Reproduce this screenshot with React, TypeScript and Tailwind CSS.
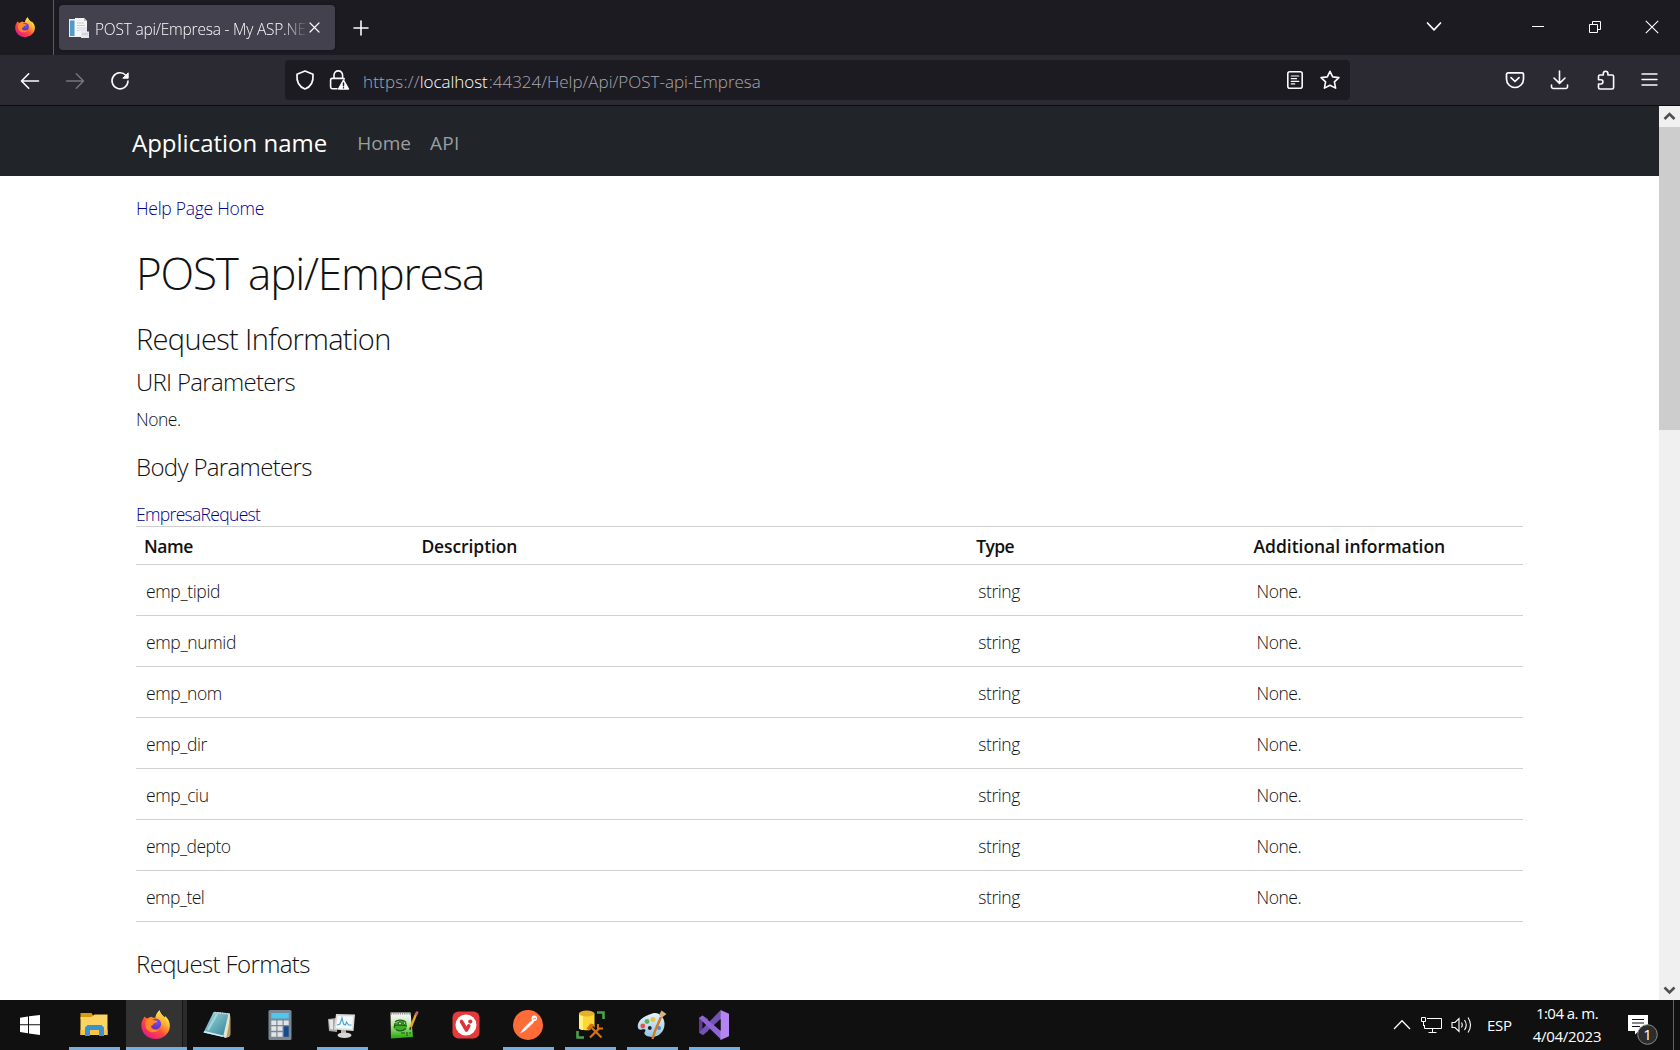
import React from "react";

const rows: [string, string][] = [
  ["emp_tipid", "tracking-[-0.36px]"],
  ["emp_numid", "tracking-[-0.35px]"],
  ["emp_nom", "tracking-[-0.42px]"],
  ["emp_dir", "tracking-[-0.42px]"],
  ["emp_ciu", "tracking-[-0.38px]"],
  ["emp_depto", "tracking-[-0.52px]"],
  ["emp_tel", "tracking-[-0.55px]"],
];

function Firefox({ size, id }: { size: number; id: string }) {
  return (
    <svg width={size} height={size} viewBox="0 0 28 28" className="block">
      <defs>
        <linearGradient id={id + "a"} x1="0.85" y1="0.1" x2="0.2" y2="0.95">
          <stop offset="0.05" stopColor="#fff44f" />
          <stop offset="0.35" stopColor="#ffa02b" />
          <stop offset="0.6" stopColor="#ff4b3e" />
          <stop offset="1" stopColor="#e8168b" />
        </linearGradient>
        <radialGradient id={id + "b"} cx="0.6" cy="0.3" r="0.8">
          <stop offset="0" stopColor="#7a4bf0" />
          <stop offset="1" stopColor="#5b2db5" />
        </radialGradient>
        <linearGradient id={id + "c"} x1="0" y1="0" x2="0" y2="1">
          <stop offset="0" stopColor="#ffe14a" />
          <stop offset="1" stopColor="#ff9a2c" stopOpacity="0.6" />
        </linearGradient>
      </defs>
      <path fill={`url(#${id}a)`} d="M3.4 6.2C4.6 7.6 5.6 7.9 6.8 8c.9-.9 2-1.4 3-1.6C10.8 7 12 7.6 14 7.4c.3-2.9 2-5.6 4-7.2.3 2.5 2 4.2 3.7 5.8.3.4.8.8 1 1.2.4-.4.5-.9.5-1.3 2.9 2.5 4.7 5.6 4.7 9.3C27.9 22.500 21.800 28 14.200 28 6.500 28 .300 22.300.300 14.900.300 12.600.900 10.400 2 8.700c.8-1 1-1.700 1.400-2.500z" />
      <circle cx="14.200" cy="13.500" r="5.200" fill={`url(#${id}b)`} />
      <path fill="#ff8a26" d="M5.400 9.500c2-1.800 5.200-.8 6.800.3 1.300.2 3.300.1 3.700.8-.5 1.500-2 1.800-3.300 2.200-.8.500-.6 1.300-1.300 1.900-.8.4-1.600.6-1.800 1.700 1.200 2.800 5.300 4 8.300 1.800-1.800 4-9 4.600-12 .6C3.800 16.300 3.600 12 5.400 9.500z" />
      <path fill={`url(#${id}c)`} d="M18 .2c.3 2.500 2 4.200 3.700 5.800 2 2.500 2.800 6 1.800 9.800-.5-3.900-2.200-6.200-5-7.700-2-.8-3.700-.9-4.500-.7.300-2.900 2-5.600 4-7.200z" />
    </svg>
  );
}

function Line({ size = 20, w = 1.5, children, color = "#fbfbfe" }: { size?: number; w?: number; color?: string; children: React.ReactNode }) {
  return (
    <svg width={size} height={size} viewBox={`0 0 ${size} ${size}`} fill="none" stroke={color} strokeWidth={w} strokeLinecap="round" strokeLinejoin="round" className="block shrink-0">
      {children}
    </svg>
  );
}

function TabBar() {
  return (
    <div className="flex h-[55px] bg-[#1c1b22] text-[#fbfbfe]">
      <div className="w-[54px] border-r border-[#5b5a63] pl-[15px] pt-[17px]">
        <Firefox size={20} id="tab" />
      </div>
      <div className="ml-[5px] mt-[5px] flex h-[45px] w-[276px] rounded bg-[#42414d] pl-[10px] pt-[13px] shadow-[0_0_3px_#00000066]">
        <svg width="20" height="20" viewBox="0 0 20 20" className="block shrink-0">
          <path d="M0 1h13v18H0z" fill="#e9eef2" />
          <path d="M1 2.500h4.500v15.500H1z" fill="#4f9ccb" />
          <path d="M6 0h9l3 3v15H6z" fill="#f5f5f6" />
          <path d="M15 0v3h3z" fill="#b9bcc2" />
          <path d="M8 5h7M8 7.500h8M8 10h3M8 12.500h2" stroke="#c8cbd0" />
          <path d="M10 9h8v4h-8zM12 13.500h8V20h-8z" fill="#e3e6ea" />
          <path d="M13 16h6" stroke="#bfc3c9" />
        </svg>
        <div className="ml-[6px] w-[213px] overflow-hidden whitespace-pre text-[15.5px] font-light leading-[22px] tracking-[-0.22px] [mask-image:linear-gradient(to_right,black_188px,transparent_213px)]">
          POST api/Empresa - My ASP.NET
        </div>
        <div className="ml-[1px] mt-[4px]">
          <Line size={11} w={1.2}><path d="M1 1l9 9M10 1l-9 9" /></Line>
        </div>
      </div>
      <div className="ml-[18px] mt-[20px]">
        <Line size={16} w={1.600}><path d="M8 1v14M1 8h14" /></Line>
      </div>
      <div className="ml-auto flex">
        <div className="mt-[17px]"><Line size={20} w={1.700}><path d="M4.500 6l6.500 6.800L17.500 6" /></Line></div>
        <svg width="13" height="14" className="ml-[89px] mt-[20px] block"><path d="M0 6.500h12" stroke="#fff" /></svg>
        <svg width="13" height="13" className="ml-[44px] mt-[21px] block" fill="none" stroke="#fff">
          <path d="M.5 3.500h8v8h-8zM3.500 3.500v-3h8v8h-3" />
        </svg>
        <svg width="14" height="14" className="ml-[43px] mr-[21px] mt-[20px] block" stroke="#fff" strokeWidth="1.1"><path d="M.8.8l12.400 12.400M13.200.8L.8 13.200" /></svg>
      </div>
    </div>
  );
}

function ToolBar() {
  return (
    <div className="flex h-[51px] items-start border-b border-[#0c0c0d] bg-[#2b2a33] text-[#fbfbfe]">
      <div className="ml-[20px] mt-[16px]"><Line w={1.6}><path d="M18.500 10H1.700M8.700 2.800L1.500 10l7.200 7.200" /></Line></div>
      <div className="ml-[25px] mt-[16px]"><Line w={1.4} color="#77767e"><path d="M1.500 10h17M11.300 2.800L18.500 10l-7.200 7.200" /></Line></div>
      <div className="ml-[25px] mt-[16px]">
        <Line w={1.600}>
          <path d="M16 4.500A8 8 0 1 0 18 10" />
          <path d="M18.200 2.200v5h-5z" fill="#fbfbfe" strokeWidth="1" />
        </Line>
      </div>
      <div className="ml-[155px] mt-[5px] flex h-[40px] w-[1065px] items-start rounded bg-[#1c1b22]">
        <div className="ml-[10px] mt-[10px]"><Line w={1.700}><path d="M10 1l8 3.200c.5 5.800-1.400 12.300-8 14.800C3.400 16.500 1.500 10 2 4.200z" /></Line></div>
        <div className="ml-[14px] mt-[10px]">
          <Line size={21} w={1.600}>
            <path d="M5 8.500V5.200a4.300 4.300 0 0 1 8.600 0v3.300M8 18.700H3.200A1.600 1.600 0 0 1 1.600 17.100V10a1.600 1.600 0 0 1 1.600-1.600h11a1.600 1.600 0 0 1 1 .5" />
            <path d="M14.500 10l5 9H9.500z" fill="#fbfbfe" strokeWidth="1.400" />
            <path d="M14.500 13v2.800M14.500 17.700v.2" stroke="#1c1b22" strokeWidth="1.400" />
          </Line>
        </div>
        <div className="ml-[13px] mt-[8px] whitespace-pre text-[17px] font-light leading-[27px] text-[#a9a8ae]">
          <span className="tracking-[0.2px]">https://</span>
          <span className="inline-block w-[69px] tracking-[-0.03px] text-white">localhost</span>
          <span>:44324/Help/Api/POST-api-Empresa</span>
        </div>
        <div className="ml-auto mt-[10px]">
          <Line w={1.600}>
            <rect x="2.800" y="1.800" width="14.400" height="16.400" rx="2" />
            <path d="M6.300 6h7.500M6.300 8.700h5.200M6.300 11.300h7.500M6.300 13.900h3.400" strokeWidth="1.200" />
          </Line>
        </div>
        <div className="ml-[15px] mr-[10px] mt-[10px]">
          <Line w={1.600}><path d="M10 1.300l2.700 5.600 6.200.7-4.500 4.300 1.200 6.200L10 15.200l-5.600 2.900 1.200-6.200L1.100 7.600l6.200-.7z" /></Line>
        </div>
      </div>
      <div className="ml-[155px] mt-[16px]"><Line w={1.700}><path d="M3 1.800h14a1.500 1.500 0 0 1 1.500 1.500V8a8.500 8.500 0 0 1-17 0V3.300A1.500 1.500 0 0 1 3 1.800zM6 6.700l4 3.800 4-3.800" /></Line></div>
      <div className="ml-[25px] mt-[15px]"><Line w={1.600}><path d="M9.500 1v12M4 8l5.500 5.300L15 8M1.500 15v1.700A1.800 1.800 0 0 0 3.300 18.500h12.400a1.800 1.800 0 0 0 1.800-1.800V15" /></Line></div>
      <div className="ml-[26px] mt-[15px]"><Line w={1.600}><path d="M7.300 5V3.500a2.300 2.300 0 0 1 4.600 0V5h4.200a1.500 1.500 0 0 1 1.500 1.500v11a1.500 1.500 0 0 1-1.500 1.500H4a1.500 1.500 0 0 1-1.500-1.500V14h2.300a2 2 0 0 0 0-4.300H2.500V6.500A1.500 1.500 0 0 1 4 5z" /></Line></div>
      <div className="ml-[24px] mt-[15px]"><Line w={1.400}><path d="M2 4h15M2 9.500h15M2 15h15" /></Line></div>
    </div>
  );
}

function ModelTable() {
  return (
    <table className="w-[1387px] table-fixed border-collapse text-left text-[17.5px] leading-[27px]">
      <thead>
        <tr className="h-[38px] border-y border-[#d0d0d0] align-top font-semibold">
          <th className="w-[20%] px-2 pt-[6px] font-semibold tracking-[-0.4px]">Name</th>
          <th className="w-[40%] px-2 pt-[6px] font-semibold tracking-[-0.1px]">Description</th>
          <th className="w-[20%] px-2 pt-[6px] font-semibold tracking-[-0.6px]">Type</th>
          <th className="w-[20%] px-2 pt-[6px] font-semibold tracking-[-0.04px]">Additional information</th>
        </tr>
      </thead>
      <tbody>
        {rows.map(([name, tracking]) => (
          <tr key={name} className="h-[51px] border-b border-[#d0d0d0] align-top font-light">
            <td className={"px-[10px] pt-[13px] " + tracking}>{name}</td>
            <td />
            <td className="px-[10px] pt-[13px] tracking-[-0.4px]">string</td>
            <td className="px-[11px] pt-[13px] tracking-[-0.5px]">None.</td>
          </tr>
        ))}
      </tbody>
    </table>
  );
}

function Page() {
  return (
    <div className="flex h-[894px] bg-white">
      <main className="w-[1659px] overflow-hidden text-[#111111]">
        <nav className="flex h-[70px] items-start bg-[#212529] pl-[132px] text-white">
          <span className="mt-[19px] text-[24px] leading-[36px]">Application name</span>
          <span className="ml-[30px] mt-[22px] text-[19px] leading-[30px] text-[#9b9d9f]">Home</span>
          <span className="ml-[19px] mt-[22px] text-[19px] leading-[30px] tracking-[0.3px] text-[#9b9d9f]">API</span>
        </nav>
        <div className="pl-[136px] font-light">
          <p className="mt-[19px] text-[17.5px] leading-[27px] tracking-[-0.27px] text-[#00008b]">Help Page Home</p>
          <h1 className="mt-[24px] text-[44px] font-light leading-[54px] tracking-[-1.17px]">POST api/Empresa</h1>
          <h2 className="mt-[21px] text-[29px] font-light leading-[36px] tracking-[-0.65px]">Request Information</h2>
          <h3 className="mt-[10px] text-[24px] font-light leading-[30px] tracking-[-0.7px]">URI Parameters</h3>
          <p className="mt-[9px] text-[17.5px] leading-[27px] tracking-[-0.45px]">None.</p>
          <h3 className="mt-[19px] text-[24px] font-light leading-[30px] tracking-[-0.65px]">Body Parameters</h3>
          <p className="mt-[19px] h-[25px] text-[17.5px] leading-[27px] tracking-[-0.68px] text-[#00008b]">EmpresaRequest</p>
          <ModelTable />
          <h3 className="mt-[27px] text-[24px] font-light leading-[30px] tracking-[-0.62px]">Request Formats</h3>
        </div>
      </main>
      <div className="flex w-[21px] flex-col bg-[#f0f0f0]">
        <svg width="21" height="21" className="block"><path d="M5.500 13l5-5 5 5" fill="none" stroke="#505050" strokeWidth="2.600" /></svg>
        <div className="h-[303px] bg-[#cdcdcd]" />
        <svg width="21" height="21" className="mt-auto block"><path d="M5.500 8.500l5 5 5-5" fill="none" stroke="#505050" strokeWidth="2.600" /></svg>
      </div>
    </div>
  );
}

function TaskButton({ children, open }: { children: React.ReactNode; open?: boolean }) {
  return (
    <div className="mr-[11px] flex h-[50px] w-[51px] shrink-0 flex-col items-center">
      <svg width="30" height="30" viewBox="0 0 30 30" className="mr-[2px] mt-[10px] block">{children}</svg>
      {open && <div className="mt-[7px] h-[3px] w-[51px] bg-[#76aee0]" />}
    </div>
  );
}

function TaskBar() {
  return (
    <div className="flex h-[50px] bg-[#101010] text-white">
      <svg width="20" height="20" viewBox="0 0 20 20" className="ml-[20px] mt-[15px] block shrink-0" fill="#fff">
        <path d="M0 2.700L8 1.500V9.300H0zM9 1.300L20 0V9.300H9zM0 10.300h8v7.900l-8-1.100zM9 10.300h11V20L9 18.500z" />
      </svg>
      <div className="ml-[29px] flex">
        <TaskButton open>
          <path d="M1.500 3h11l2 3-2 3h-11z" fill="#d99a12" />
          <path d="M1.500 7h11l3-2.500h13V25h-27z" fill="#fcd462" />
          <path d="M1.500 20h27v5h-27z" fill="#f8c544" />
          <path d="M6 26V17.500L8.500 15h14l2.500 2.500V26h-5v-6h-9v6z" fill="#3a92d4" />
        </TaskButton>
        <div className="ml-[-5px] mr-[6px] flex h-[50px] w-[61px] shrink-0 flex-col bg-[#333333]">
          <div className="flex h-[47px]">
            <div className="w-[56px] pl-[15px] pt-[10px]"><Firefox size={29} id="task" /></div>
            <div className="w-[5px] border-l border-[#151515] bg-[#2a2a2a]" />
          </div>
          <div className="h-[3px] bg-[#76aee0]" />
        </div>
        <TaskButton open>
          <defs><linearGradient id="np" x1="0" y1="0" x2="1" y2="1"><stop offset="0" stopColor="#a6dbe3" /><stop offset="1" stopColor="#2d8394" /></linearGradient></defs>
          <path d="M13 2l14 1.500-.5 23L22 28l-5-4z" fill="#e8e2cf" />
          <path d="M27.500 5v20l-4 3z" fill="#b89c62" />
          <path d="M10.500 2l15 1.700L20 27 .500 22.500z" fill="url(#np)" />
          <path d="M.5 22.500L20 27l.3-1.500L1.500 21z" fill="#d5edf0" />
          <path d="M11.500 2.500l14 1.500" stroke="#d9d9d9" strokeWidth="1.500" strokeDasharray="1.500 1" />
          <path d="M14 4L5 20" stroke="#c4ecf0" strokeOpacity=".6" strokeWidth="2" />
        </TaskButton>
        <TaskButton>
          <rect x="3.500" width="23" height="30" rx="1.500" fill="#7b8793" />
          <rect x="6.300" y="3" width="17.500" height="5.500" fill="#4cc8ee" />
          <path d="M6.300 10.500h5v4.500h-5zM12.500 10.500h5v4.500h-5zM18.700 10.500h5v4.500h-5zM6.300 16.300h5v4.500h-5zM12.500 16.300h5v4.500h-5zM6.300 22.200h5v4.600h-5zM12.500 22.200h5v4.600h-5z" fill="#e1e5e9" />
          <path d="M18.700 16.300h5v10.500h-5z" fill="#174a8c" />
        </TaskButton>
        <TaskButton open>
          <path d="M1 9l9-1v14l-8-1z" fill="#a8aaa9" />
          <path d="M2 10l4-.5v10L3 19z" fill="#e6e6e2" />
          <path d="M9 4l19 .5L26.500 21 7 19.500z" fill="#dcdcda" />
          <path d="M10.500 6l15.500.4L25 19 9 18z" fill="#f3fafe" />
          <path d="M10 15l3-1 2-6 1.500 6 2 1 1-3 2 3h3" stroke="#4a9fd0" fill="none" strokeWidth="1.100" />
          <path d="M14 20h5v4h-5z" fill="#b5b5b3" />
          <ellipse cx="17.500" cy="25.200" rx="7" ry="2.800" fill="#d7d7d4" />
        </TaskButton>
        <TaskButton>
          <defs><linearGradient id="npp" x1="0" y1="0" x2="0" y2="1"><stop offset="0.15" stopColor="#f0f5ec" /><stop offset="0.5" stopColor="#b5e29c" /><stop offset="0.95" stopColor="#2fae10" /></linearGradient></defs>
          <path d="M1.500 2.500h20L24 27l-22 1.500z" fill="url(#npp)" />
          <path d="M2 3.500h19" stroke="#8c8c8c" strokeWidth="2" strokeDasharray="1.200 1" />
          <path d="M5 18c0-5 3-7 7-7s6 2 6 5-3 5-7 4.500S5 20 5 18z" fill="#3fae22" />
          <path d="M6 12c2-2 7-3 11 0M5 16c4-2 8-1 13 0M7 19.500c3 2 7 1.500 10-1M6 13l-1 5" stroke="#1d5b16" strokeWidth="1.100" fill="none" />
          <circle cx="11" cy="13.500" r="1.600" fill="#a5e58a" stroke="#17420f" strokeWidth=".8" />
          <circle cx="15.500" cy="13" r="1.400" fill="#a5e58a" stroke="#17420f" strokeWidth=".8" />
          <path d="M12 23h4M18 22v4M20 23h2" stroke="#165010" strokeWidth="1" />
          <path d="M27.500 3L21.500 18" stroke="#e8a51d" strokeWidth="2.400" />
          <path d="M28.600 1.500L27 5" stroke="#b4686c" strokeWidth="2.400" />
          <path d="M21.700 17.300L20.800 20" stroke="#453018" strokeWidth="1.500" />
        </TaskButton>
        <TaskButton>
          <rect x="1.500" y="1.500" width="27" height="27" rx="6" fill="#e5393c" />
          <circle cx="15" cy="15" r="10.500" fill="#fff" />
          <path d="M10.500 11.500l5 8.500 2.300-4.200" fill="none" stroke="#d9363b" strokeWidth="3.600" strokeLinecap="round" strokeLinejoin="round" />
          <circle cx="19.300" cy="11.600" r="2.100" fill="#d9363b" />
        </TaskButton>
        <TaskButton open>
          <circle cx="15" cy="15" r="15" fill="#ff6c37" />
          <path d="M7 23.500l3-4.500 5-5.500 4.500-3.500 1.700 1.700-4 4.500-5.700 4.800z" fill="#fff" />
          <path d="M11.500 17l4-3.500M13.500 19l5-4.500" stroke="#ff9a74" strokeWidth=".7" />
          <circle cx="21.300" cy="8.200" r="2.800" fill="#fff" />
          <path d="M20 9l3-.6" stroke="#ff6c37" strokeWidth=".8" />
        </TaskButton>
        <TaskButton open>
          <path d="M4 3.500v14.500c0 3 15.500 3 15.500 0V3.500z" fill="#fdd835" />
          <path d="M4 3.500v14.500c0 1 1.500 1.700 4 2V4z" fill="#fff17a" />
          <ellipse cx="11.700" cy="3.500" rx="7.800" ry="3" fill="#e5b12c" />
          <path d="M22 2.500h6.500V9M2.500 21v6.500H9" fill="none" stroke="#4ba04e" strokeWidth="2.600" />
          <path d="M15.500 16.500L26.500 27.500M26 16L15 27.500" stroke="#101010" strokeWidth="4.500" />
          <path d="M15.500 16.500L26.500 27.500M24.500 18L15 27.500" stroke="#d9730d" strokeWidth="2.200" />
          <path d="M11.500 18.500l4-5 4 1-5.500 6z" fill="#d9730d" />
          <path d="M23 14v4.500h5" stroke="#d9730d" strokeWidth="2" fill="none" />
        </TaskButton>
        <TaskButton open>
          <defs><linearGradient id="pal" x1="0" y1="0" x2="0" y2="1"><stop offset="0" stopColor="#e8f4fa" /><stop offset="1" stopColor="#96c3dc" /></linearGradient></defs>
          <path d="M14 4C20 1 27 6 27.500 13 28 21 22 27 15 27c-6 0-9-3-7-5.500 1.500-2-1-2.500-3-2-3 .8-5-1-4-5.500C2.500 9 8 6 14 4z" fill="url(#pal)" />
          <circle cx="5.800" cy="16" r="2.400" fill="#e2554f" /><circle cx="10" cy="11.500" r="2.400" fill="#59b356" /><circle cx="16" cy="9.500" r="2.500" fill="#edc448" />
          <circle cx="12.800" cy="18" r="1.900" fill="#16232b" /><circle cx="22" cy="18" r="2" fill="#4d91c9" />
          <path d="M24 7L18 21l-2.500 8" stroke="#d07a2c" strokeWidth="2.400" fill="none" />
          <path d="M22 5l2.500-4.500L29.500 4l-4.500 3.500z" fill="#d9b183" />
        </TaskButton>
        <TaskButton open>
          <path d="M0 8l3.500-2.500L9 8.700v12.500L4 25l-4-2.500z" fill="#5c3a94" />
          <path d="M0 22.500L21.500.200 22 9 4 25z" fill="#7252b2" />
          <path d="M0 8l3.500-2.500L22.500 21.500V30z" fill="#9064d4" />
          <path d="M21.500 0L30 3.800v22.400L21.500 30z" fill="#b285f0" />
          <path d="M3.500 11.500v7.200L7 15z" fill="#101010" />
          <path d="M21.500 9v11.500L15.300 15z" fill="#101010" />
        </TaskButton>
      </div>
      <div className="ml-auto flex shrink-0">
        <svg width="18" height="12" className="mt-[19px] block" fill="none" stroke="#fff" strokeWidth="1.300"><path d="M1 10l8-8.300L17 10" /></svg>
        <svg width="22" height="18" className="ml-[10px] mt-[16px] block" fill="none" stroke="#fff">
          <path d="M6 2.500h14.500v10H3.500V9M11.500 12.500v3.500M7.500 16.500h8" />
          <path d="M.5 1.500h4v4h-4zM2.500 5.500V10" />
        </svg>
        <svg width="22" height="18" className="ml-[8px] mt-[16px] block" fill="none" stroke="#fff" strokeWidth="1.100">
          <path d="M1 6.500h3l4-4v13l-4-4H1z" /><path d="M10.500 6.500q1.500 2.500 0 5M13.500 4q3.500 5 0 10M17 1.500q5 7.500 0 15" />
        </svg>
        <span className="ml-[14px] mt-[14px] w-[28px] text-[15px] leading-[22px] tracking-[-0.3px]">ESP</span>
        <div className="ml-[13px] flex w-[78px] flex-col items-center whitespace-pre pt-[2px] text-[15px] leading-[23px]">
          <span className="tracking-[-0.55px]">1:04 a. m.</span>
          <span className="tracking-[-0.3px]">4/04/2023</span>
        </div>
        <div className="ml-[22px] mt-[14px]">
          <svg width="32" height="32" viewBox="0 0 32 32" className="block">
            <path d="M0 1h20v16H11l-4 3.500V17H0z" fill="#fff" />
            <path d="M4 5.500h12M4 9h12M4 12.500h8" stroke="#101010" />
            <circle cx="19.500" cy="20.500" r="9.800" fill="#2d2d2d" stroke="#8a8a8a" />
            <text x="19.500" y="26" textAnchor="middle" fontSize="15" fill="#fff" fontFamily="Open Sans">1</text>
          </svg>
        </div>
        <div className="ml-[13px] w-[7px] border-l border-[#606060]" />
      </div>
    </div>
  );
}

export default function App() {
  return (
    <div className="flex h-[1050px] w-[1680px] flex-col overflow-hidden font-['Open_Sans',sans-serif]">
      <TabBar />
      <ToolBar />
      <Page />
      <TaskBar />
    </div>
  );
}
